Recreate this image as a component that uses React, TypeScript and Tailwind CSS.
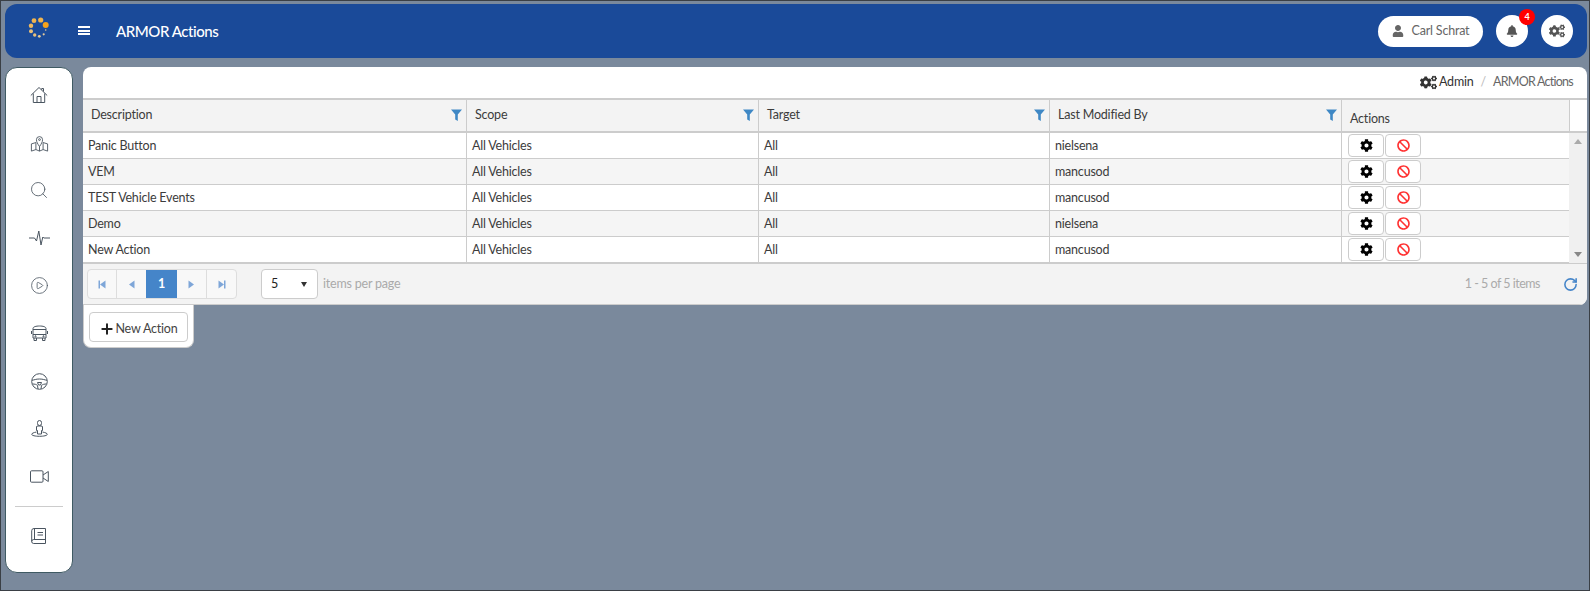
import React from 'react';
import { FaBell, FaCog, FaCogs, FaUser, FaBan } from 'react-icons/fa';
import { Search, CirclePlay, Plus, RotateCw } from 'lucide-react';

const rows = [
  { d: 'Panic Button', by: 'nielsena' },
  { d: 'VEM', by: 'mancusod' },
  { d: 'TEST Vehicle Events', by: 'mancusod' },
  { d: 'Demo', by: 'nielsena' },
  { d: 'New Action', by: 'mancusod' },
];

const Logo = () => (
  <svg width="24" height="24" viewBox="0 0 24 24" className="mb-[6px]">
    <circle cx="18.7" cy="9" r="3" fill="#f5a21c" />
    <circle cx="13.7" cy="4" r="2.6" fill="#f0b44e" />
    <circle cx="7" cy="4.700" r="2.400" fill="#f0b44e" />
    <circle cx="4" cy="9.700" r="2.200" fill="#eeb860" />
    <circle cx="4" cy="15.300" r="2" fill="#e9c07a" />
    <circle cx="7.700" cy="19" r="1.700" fill="#e9c07a" />
    <circle cx="12.300" cy="20.300" r="1.400" fill="#e6cb9a" />
    <circle cx="16.700" cy="18.300" r="1.100" fill="#e6cb9a" />
    <circle cx="18.700" cy="14" r="0.800" fill="#e6cb9a" />
  </svg>
);

const HomeIcon = () => (
  <svg width="18" height="18" viewBox="0 0 18 18" fill="none" stroke="#4a5560" strokeWidth="1">
    <path d="M.8 9.500 9 1.500l8.200 8" />
    <path d="M13.500 5.500V2.500h-1.800v1.300" />
    <path d="M3.300 7.500V16.500h11.400V7.500" />
    <path d="M7 16.500V10.500h4v6" />
  </svg>
);

const MapPinned = () => (
  <svg width="19" height="18" viewBox="0 0 20 20" fill="none" stroke="#4a5560" strokeWidth="1">
    <path d="M6 9.500 1 11v8l5-1.700 4 1.700 4-1.700 5 1.700v-8l-5-1.500" />
    <path d="M6 9.500v7.800M14 9.500v7.800M10 14v5" />
    <path d="M10 14C8 11 6.600 8.800 6.600 6.300a3.400 3.400 0 0 1 6.800 0C13.400 8.800 12 11 10 14Z" />
    <circle cx="10" cy="6.200" r="1" />
  </svg>
);

const Pulse = () => (
  <svg width="21" height="16" viewBox="0 0 21 16" fill="none" stroke="#4a5560" strokeWidth="1">
    <path d="M0 8h5.500L7.500 11 9.800 1l2.200 14 1.800-8 1 1H21" />
  </svg>
);

const BusIcon = () => (
  <svg width="17" height="17" viewBox="0 0 17 17" fill="none" stroke="#4a5560" strokeWidth="1">
    <path d="M2 3.500C2 1.800 5 1 8.500 1S15 1.800 15 3.500V13H2Z" />
    <path d="M2 4.500h13M2 9.500h13M.5 6v3M16.500 6v3" />
    <path d="M3 13v2.500h2.500V13M11.500 13v2.500H14V13" />
    <circle cx="4.500" cy="11.300" r="0.600" />
    <circle cx="12.500" cy="11.300" r="0.600" />
  </svg>
);

const Wheel = () => (
  <svg width="17" height="17" viewBox="0 0 17 17" fill="none" stroke="#4a5560" strokeWidth="1">
    <circle cx="8.500" cy="8.500" r="7.800" />
    <path d="M1 7.300c2.500-.4 3.800-1.300 7.500-1.300s5 .9 7.500 1.300" />
    <path d="M1.400 11c2.300 0 4.100.4 5.100 1.500L7 15.900M15.600 11c-2.300 0-4.100.4-5.100 1.500L10 15.900" />
    <path d="M6.500 9.500h4L9.500 12h-2Z" />
  </svg>
);

const Person = () => (
  <svg width="17" height="17" viewBox="0 0 17 17" fill="none" stroke="#4a5560" strokeWidth="1">
    <path d="M6.500 2.500a2 2 0 0 1 4 0v1a2 2 0 0 1-4 0Z" />
    <path d="M6 6h5l.5 1v3.500h-1v3.500h-4v-3.500h-1V7Z" />
    <path d="M5.500 12c-2.800.5-4.800 1.400-4.800 2.300 0 1.200 3.500 2 7.800 2s7.800-.8 7.800-2c0-.9-2-1.800-4.800-2.300" />
  </svg>
);

const VideoIcon = () => (
  <svg width="19" height="13" viewBox="0 0 19 13" fill="none" stroke="#4a5560" strokeWidth="1">
    <rect x="0.500" y="0.800" width="12.500" height="11.400" rx="1" />
    <path d="M13 5 18.300 1.500v10L13 8" />
  </svg>
);

const BookIcon = () => (
  <svg width="16" height="16" viewBox="0 0 16 16" fill="none" stroke="#4a5560" strokeWidth="1">
    <path d="M14.500.5H3A2.300 2.300 0 0 0 .7 2.800v10.700A2 2 0 0 0 2.700 15.500h11.800V.5Z" />
    <path d="M.7 13.500a2 2 0 0 1 2-2h11.800M3.500 1v10" />
    <path d="M6.500 4.500h5.500M6.500 7h5.500" />
  </svg>
);

const Filter = () => (
  <svg width="11" height="12" viewBox="0 0 11 12" className="shrink-0">
    <path d="M0 .5h11L6.800 5.500V12L4.200 10.500V5.500Z" fill="#3f88c5" />
  </svg>
);

const PagerIcon = ({ d, bar }: { d: 'l' | 'r'; bar?: boolean }) => (
  <svg width="9" height="9" viewBox="0 0 9 9" fill="#7ea6d8">
    {d === 'l' ? <path d="M7.500 .5v8L2 4.500Z" /> : <path d="M1.500 .5v8L7 4.500Z" />}
    {bar && (d === 'l' ? <rect x="0.500" y="0.500" width="1.500" height="8" /> : <rect x="7" y="0.500" width="1.500" height="8" />)}
  </svg>
);

const Slot = ({ children }: { children: React.ReactNode }) => (
  <div className="w-[22px] h-5 flex items-center justify-center">{children}</div>
);

export default function App() {
  return (
    <div
      className="w-[1590px] h-[591px] overflow-hidden bg-[#7a899c] border border-[#3a3f45] pt-[3px] pl-1 pr-[2px] text-[12.500px] tracking-[-0.2px] text-[#3c3c3c]"
      style={{ fontFamily: 'Lato, "Open Sans", sans-serif' }}
    >
      <header className="h-[54px] bg-[#1a4a99] rounded-xl flex items-center pl-[22px] pr-[14px] text-white">
        <Logo />
        <div className="ml-[27px] mb-[1px] flex flex-col gap-[1.500px] w-3">
          <span className="h-[2px] bg-white" />
          <span className="h-[2px] bg-white" />
          <span className="h-[2px] bg-white" />
        </div>
        <h1 className="ml-[26px] text-[15px] tracking-[-0.45px] font-medium">ARMOR Actions</h1>
        <div className="ml-auto flex items-center gap-[13px]">
          <div className="w-[105px] h-[31px] rounded-full bg-white text-[#666] flex items-center justify-center gap-2">
            <FaUser className="w-3 h-3" />
            Carl Schrat
          </div>
          <div className="relative w-[32px] h-[32px] rounded-full bg-white text-[#555] flex items-center justify-center">
            <FaBell className="w-3 h-3" />
            <span className="absolute -top-[6px] left-[23px] w-4 h-4 rounded-full bg-[#f00] text-white text-[9px] font-bold flex items-center justify-center">4</span>
          </div>
          <div className="w-[32px] h-[32px] rounded-full bg-white text-[#555] flex items-center justify-center">
            <FaCogs className="w-4 h-4" />
          </div>
        </div>
      </header>

      <div className="flex mt-[9px] gap-[10px] items-start">
        <nav className="w-[68px] h-[506px] shrink-0 bg-white rounded-xl border border-[#3f5a63] flex flex-col items-center pt-[17px]">
          <div className="flex flex-col items-center gap-[27.700px]">
            <Slot><HomeIcon /></Slot>
            <Slot><MapPinned /></Slot>
            <Slot><Search strokeWidth={1} className="w-5 h-5 shrink-0 text-[#4a5560]" /></Slot>
            <Slot><Pulse /></Slot>
            <Slot><CirclePlay strokeWidth={1} className="w-[19px] h-[19px] text-[#4a5560]" /></Slot>
            <Slot><BusIcon /></Slot>
            <Slot><Wheel /></Slot>
            <Slot><Person /></Slot>
            <Slot><VideoIcon /></Slot>
          </div>
          <div className="w-12 h-px bg-[#ccc] mt-[19px]" />
          <div className="mt-[19px]"><Slot><BookIcon /></Slot></div>
        </nav>

        <main className="flex-1 min-w-0">
          <section className="bg-white rounded-t-lg rounded-br-lg overflow-hidden">
            <div className="h-[31px] flex items-center justify-end pr-[14px]">
              <FaCogs className="w-[17px] h-[17px] text-[#333] mr-[2px]" />
              <span className="text-[#333]">Admin</span>
              <span className="mx-[7px] text-[#bbb]">/</span>
              <span className="text-[#666] tracking-[-0.75px]">ARMOR Actions</span>
            </div>

            <div className="grid grid-cols-[384px_292px_291px_292px_228px_1fr] border-t-2 border-[#ccc]">
              {['Description', 'Scope', 'Target', 'Last Modified By'].map(h => (
                <div key={h} className="h-[31px] bg-[#f3f3f3] border-r border-[#ccc] flex items-center justify-between pl-[8px] pr-[4px] pb-[1px]">
                  <span>{h}</span>
                  <Filter />
                </div>
              ))}
              <div className="h-[31px] bg-[#f3f3f3] border-r border-[#ccc] flex items-end pb-[2px] pl-2">Actions</div>
              <div className="bg-white" />
            </div>

            <div className="flex border-t-2 border-[#ccc]">
              <div className="flex-1 min-w-0">
                {rows.map((r, i) => (
                  <div
                    key={r.d}
                    className={`grid grid-cols-[384px_292px_291px_292px_1fr] h-[26px] border-b border-[#ccc] ${i % 2 ? 'bg-[#f5f5f5]' : 'bg-white'}`}
                  >
                    <div className="border-r border-[#ccc] pl-[5px] pt-[1px] flex items-center">{r.d}</div>
                    <div className="border-r border-[#ccc] pl-[5px] pt-[1px] flex items-center">All Vehicles</div>
                    <div className="border-r border-[#ccc] pl-[5px] pt-[1px] flex items-center">All</div>
                    <div className="border-r border-[#ccc] pl-[5px] pt-[1px] flex items-center">{r.by}</div>
                    <div className="pl-[6px] flex items-center gap-px">
                      <button className="w-[36px] h-[23px] bg-white border border-[#ccc] rounded flex items-center justify-center text-black">
                        <FaCog className="w-[13px] h-[13px]" />
                      </button>
                      <button className="w-[36px] h-[23px] bg-white border border-[#ccc] rounded flex items-center justify-center text-[#f33]">
                        <FaBan className="w-[13px] h-[13px]" />
                      </button>
                    </div>
                  </div>
                ))}
              </div>
              <div className="w-[18px] bg-[#f0f0f0] flex flex-col justify-between items-center py-[6px]">
                <span className="w-0 h-0 border-x-[4px] border-x-transparent border-b-[5px] border-b-[#aaa]" />
                <span className="w-0 h-0 border-x-[4px] border-x-transparent border-t-[5px] border-t-[#888]" />
              </div>
            </div>

            <div className="h-[42px] bg-[#f3f3f3] border-t border-b border-[#ccc] flex items-center pl-[4px] pr-[9px]">
              <div className="flex w-[150px] h-[30px] border border-[#ddd] rounded bg-[#f8f8f8] overflow-hidden">
                <div className="w-[29px] border-r border-[#ddd] flex items-center justify-center"><PagerIcon d="l" bar /></div>
                <div className="w-[29px] flex items-center justify-center"><PagerIcon d="l" /></div>
                <div className="w-[31px] bg-[#4585c9] text-white flex items-center justify-center font-bold">1</div>
                <div className="w-[30px] border-r border-[#ddd] flex items-center justify-center"><PagerIcon d="r" /></div>
                <div className="w-[29px] flex items-center justify-center"><PagerIcon d="r" bar /></div>
              </div>
              <div className="ml-[24px] w-[57px] h-[30px] bg-white border border-[#ccc] rounded flex items-center justify-between pl-[9px] pr-[10px] text-[#222]">
                <span>5</span>
                <span className="w-0 h-0 border-x-[3.500px] border-x-transparent border-t-[5px] border-t-[#333]" />
              </div>
              <span className="ml-[5px] text-[#aaa]">items per page</span>
              <span className="ml-auto text-[#aaa] tracking-[-0.5px]">1 - 5 of 5 items</span>
              <RotateCw className="ml-[23px] w-[15px] h-[15px] text-[#4585c9]" strokeWidth={2.500} />
            </div>
          </section>

          <div className="w-[111px] h-[43px] bg-white rounded-b-lg border-x border-b border-[#ccc] pl-[5px] pt-[7px]">
            <button className="w-[99px] h-[30px] border border-[#ccc] rounded flex items-center justify-center text-[#444] pt-[4px]">
              <Plus className="w-4 h-4 text-[#222]" strokeWidth={3} />
              New Action
            </button>
          </div>
        </main>
      </div>
    </div>
  );
}
